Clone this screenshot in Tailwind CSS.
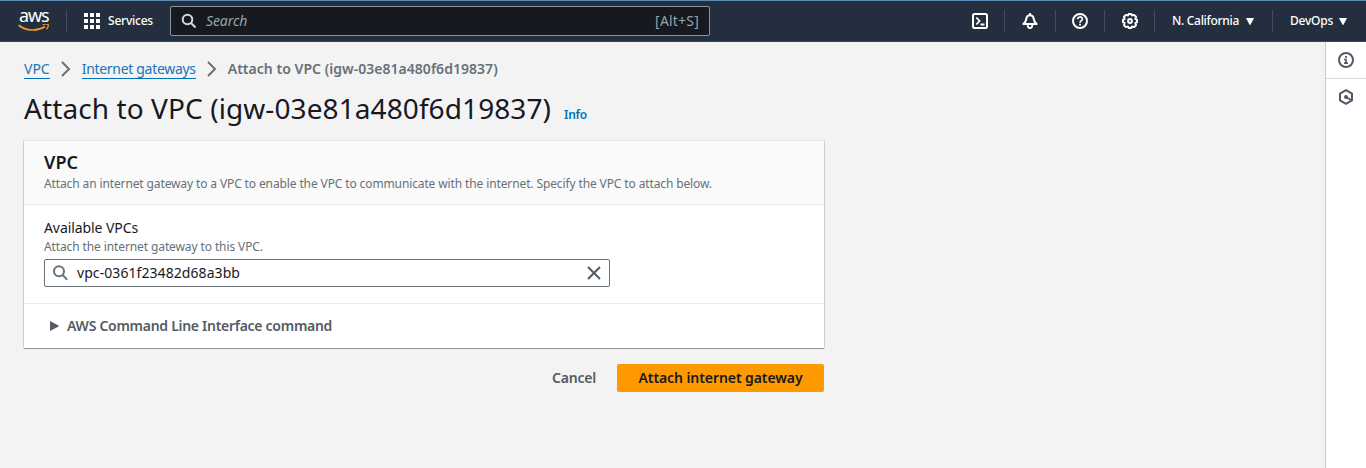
<!DOCTYPE html>
<html lang="en">
<head>
<meta charset="utf-8">
<title>Attach to VPC</title>
<script src="https://cdn.jsdelivr.net/npm/@tailwindcss/browser@4"></script>
</head>
<body class="h-[468px] w-[1366px] overflow-hidden bg-[#f3f3f3] font-['Noto_Sans','Open_Sans',sans-serif] text-sm text-[#16191f]">
<header class="flex h-[42px] items-center border-t border-b border-t-[#5c8bb5] border-b-[#414750] bg-[#232f3e] text-xs font-medium text-white">
  <div class="ml-[17px] flex h-10 w-[33px] flex-col pt-[5px]">
    <span class="pl-[2px] text-[18px] leading-[18px] font-normal tracking-[-1.1px]">aws</span>
    <svg width="33" height="10" viewBox="0 0 33 10" fill="none" stroke="#f29a2e"><path d="M1.500 1.300C9.500 7.300 20 7.300 28 2.700" stroke-width="1.700"/><path d="M25.800 .8c2.200-.8 4.800-.8 5.300-.2.500.6-.2 3.200-1.700 4.800" stroke-width="1.300"/></svg>
  </div>
  <div class="ml-4 h-[22px] w-px bg-[#414d5c]"></div>
  <svg class="ml-[17px]" width="16" height="16" viewBox="0 0 16 16" fill="#fff"><path d="M0 0h4v4H0zM6 0h4v4H6zM12 0h4v4h-4zM0 6h4v4H0zM6 6h4v4H6zM12 6h4v4h-4zM0 12h4v4H0zM6 12h4v4H6zM12 12h4v4h-4z"/></svg>
  <span class="ml-2 w-[62px] tracking-[-0.22px]">Services</span>
  <div class="flex h-[30px] w-[540px] items-center rounded-[2px] border border-[#8d9499] bg-[#16191f] pr-[10px] pl-[10px] text-sm font-normal text-[#95a5a6]">
    <svg width="16" height="16" viewBox="0 0 16 16" fill="none" stroke="#d5dbdb" stroke-width="2"><circle cx="6.500" cy="6.500" r="4.800"/><path d="M10 10l4.500 4.500"/></svg>
    <span class="ml-[9px] italic tracking-[-0.1px]">Search</span>
    <span class="ml-auto tracking-[0.2px]">[Alt+S]</span>
  </div>
  <div class="ml-auto flex items-center">
    <div class="flex h-[22px] w-[33px] items-center border-r border-[#414d5c]">
      <svg width="16" height="16" viewBox="0 0 16 16" fill="none" stroke="#fff" stroke-width="2"><rect x="1" y="1" width="14" height="14" rx="1.500"/><path d="M4.300 4.500L7.600 8l-3.300 3.500M8.500 11.500h4" stroke-width="1.800"/></svg>
    </div>
    <div class="flex h-[22px] w-[51px] items-center justify-center border-r border-[#414d5c]">
      <svg width="16" height="16" viewBox="0 0 16 16" fill="none" stroke="#fff" stroke-width="2" stroke-linejoin="round"><path d="M8 0v2M1.300 11h13.400c-2-1.200-2.600-2.500-3-5C11.400 3.500 10 2.300 8 2.300S4.600 3.500 4.300 6c-.4 2.500-1 3.800-3 5z"/><path d="M5.800 11.500v1.300c0 2.900 4.400 2.900 4.400 0v-1.300" stroke-width="1.800"/></svg>
    </div>
    <div class="flex h-[22px] w-[49px] items-center justify-center border-r border-[#414d5c]">
      <svg width="16" height="16" viewBox="0 0 16 16" fill="none" stroke="#fff" stroke-width="2"><circle cx="8" cy="8" r="7"/><path d="M5.700 6.300C5.700 3.200 10.400 3.300 10.400 6 10.400 7.700 8 7.600 8 9.700M8 10.800v1.800" stroke-width="1.700"/></svg>
    </div>
    <div class="flex h-[22px] w-[50px] items-center justify-center border-r border-[#414d5c]">
      <svg width="16" height="16" viewBox="0 0 16 16" fill="none" stroke="#fff" stroke-width="2" stroke-linejoin="round"><path d="M6.700 1h2.600l.6 1.500 2.200-.6 1.900 1.900-.6 2.200 1.600.7v2.600l-1.600.7.600 2.200-1.900 1.900-2.200-.6L9.300 15H6.700l-.6-1.500-2.200.6L2 12.200l.6-2.200L1 9.300V6.700L2.600 6 2 3.800l1.900-1.900 2.200.6z"/><circle cx="8" cy="8" r="1.900"/></svg>
    </div>
    <div class="flex h-[22px] w-[118px] items-center border-r border-[#414d5c] pl-[17px]">
      <span class="w-[74px] whitespace-nowrap tracking-[-0.31px]">N. California</span>
      <svg width="8" height="7" viewBox="0 0 8 7" fill="#fff"><path d="M0 0h8L4.300 7h-.6z"/></svg>
    </div>
    <div class="flex h-[22px] items-center pr-[19px] pl-[17px]">
      <span class="w-[49px] tracking-[-0.24px]">DevOps</span>
      <svg width="8" height="7" viewBox="0 0 8 7" fill="#fff"><path d="M0 0h8L4.300 7h-.6z"/></svg>
    </div>
  </div>
</header>

<div class="flex h-[426px]">
  <main class="flex-1 pt-[17px] pl-6">
    <nav class="flex h-5 items-start leading-[19px] text-[#687078]">
      <a class="border-b border-[#0073bb] text-[#2074b8]">VPC</a>
      <svg class="mt-[2px] ml-[11px]" width="10" height="16" viewBox="0 0 10 16" fill="none" stroke="#687078" stroke-width="2"><path d="M1 1l7 7-7 7"/></svg>
      <a class="ml-[11px] w-[114px] whitespace-nowrap border-b border-[#0073bb] tracking-[-0.31px] text-[#2074b8]">Internet gateways</a>
      <svg class="mt-[2px] ml-[11px]" width="10" height="16" viewBox="0 0 10 16" fill="none" stroke="#687078" stroke-width="2"><path d="M1 1l7 7-7 7"/></svg>
      <span class="ml-[11px] font-semibold tracking-[0.03px]">Attach to VPC (igw-03e81a480f6d19837)</span>
    </nav>
    <div class="mt-[11px] flex items-baseline">
      <h1 class="w-[540px] whitespace-nowrap text-[28px] leading-9 tracking-[0.09px]">Attach to VPC (igw-03e81a480f6d19837)</h1>
      <a class="text-xs font-semibold tracking-[-0.24px] text-[#0073bb]">Info</a>
    </div>

    <section class="mt-[15px] h-[207px] w-[800px] bg-white shadow-[0_1px_0_0_#8f9599,1px_0_0_0_#ccd1d1,-1px_0_0_0_#ccd1d1,0_0_1px_1px_#e6e9e9]">
      <div class="h-16 border-b border-[#eaeded] bg-[#fafafa] px-5 pt-[10px]">
        <h2 class="text-[18px] leading-[22px] font-semibold tracking-[0.03px]">VPC</h2>
        <p class="mt-[2px] text-xs leading-[18px] tracking-[-0.12px] text-[#687078]">Attach an internet gateway to a VPC to enable the VPC to communicate with the internet. Specify the VPC to attach below.</p>
      </div>
      <div class="h-[99px] border-b border-[#eaeded] px-5 pt-3">
        <div class="leading-[22px] tracking-[-0.08px]">Available VPCs</div>
        <div class="text-xs leading-4 tracking-[-0.11px] text-[#687078]">Attach the internet gateway to this VPC.</div>
        <div class="mt-[4px] flex h-7 w-[566px] items-center rounded-[2px] border border-[#687078] pr-2 pl-2">
          <svg width="16" height="16" viewBox="0 0 16 16" fill="none" stroke="#687078" stroke-width="2"><circle cx="6" cy="6.300" r="5"/><path d="M9.600 10l4.600 4.600"/></svg>
          <span class="ml-2 tracking-[0.07px]">vpc-0361f23482d68a3bb</span>
          <svg class="ml-auto" width="14" height="14" viewBox="0 0 14 14" fill="none" stroke="#545b64" stroke-width="2"><path d="M1 1l12 12M13 1L1 13"/></svg>
        </div>
      </div>
      <div class="flex h-11 items-center pl-[26px]">
        <svg width="9" height="10" viewBox="0 0 9 10" fill="#545b64"><path d="M0 0l8.500 4.600v.8L0 10z"/></svg>
        <span class="ml-2 font-semibold tracking-[-0.28px] text-[#545b64]">AWS Command Line Interface command</span>
      </div>
    </section>

    <div class="mt-4 flex h-7 w-[800px] items-center justify-end">
      <span class="mr-[21px] font-semibold tracking-[-0.2px] text-[#545b64]">Cancel</span>
      <button class="h-7 w-[207px] rounded-[2px] bg-[#ff9900] font-semibold tracking-[-0.08px]">Attach internet gateway</button>
    </div>
  </main>

  <aside class="w-[41px] border-l border-[#c4c9ca] bg-white">
    <div class="flex h-[37px] items-center justify-center border-b border-[#d5dbdb]">
      <svg width="16" height="16" viewBox="0 0 16 16" fill="none" stroke="#545b64" stroke-width="2"><circle cx="8" cy="8" r="7"/><path d="M8 4v2M6 7.500h2V11M6 11.200h4" stroke-width="1.700"/></svg>
    </div>
    <div class="flex h-9 items-center justify-center">
      <svg width="16" height="16" viewBox="0 0 16 16" fill="none" stroke="#545b64" stroke-width="2"><path d="M8 1.200l6 3.400v6.800l-6 3.400-6-3.400V4.600z"/><path d="M8 8l5 3"/><circle cx="8" cy="8" r="2" fill="#545b64" stroke="none"/></svg>
    </div>
  </aside>
</div>
</body>
</html>
